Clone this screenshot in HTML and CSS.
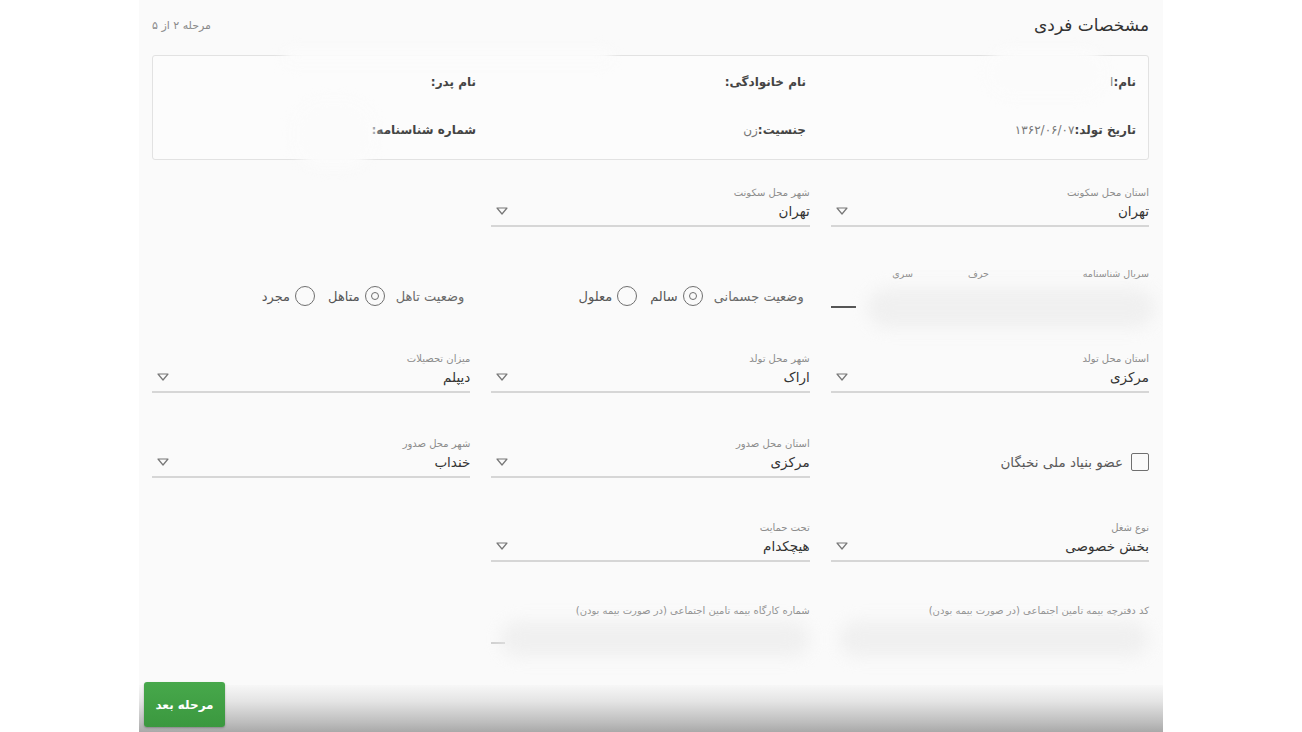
FILE: index.html
```html
<!DOCTYPE html>
<html lang="fa" dir="rtl">
<head>
<meta charset="utf-8">
<title>مشخصات فردی</title>
<link rel="stylesheet" href="styles.css">
</head>
<body>
<div class="page">
  <main class="content">
    <header class="head">
      <h1 class="title">مشخصات فردی</h1>
      <span class="step">مرحله ۲ از ۵</span>
    </header>

    <section class="info">
      <div class="info-item"><b>نام:</b><span>ا</span></div>
      <div class="info-item"><b>نام خانوادگی:</b></div>
      <div class="info-item"><b>نام پدر:</b></div>
      <div class="info-item"><b>تاریخ تولد:</b><span>۱۳۶۲/۰۶/۰۷</span></div>
      <div class="info-item"><b>جنسیت:</b><span>زن</span></div>
      <div class="info-item"><b>شماره شناسنامه:</b></div>
      <i class="redact rd-a"></i>
      <i class="redact rd-b"></i>
      <i class="redact rd-c"></i>
    </section>

    <div class="row r1">
      <div class="select">
        <label class="lbl">استان محل سکونت</label>
        <div class="val"><span>تهران</span><svg class="arrow" viewBox="0 0 12 8"><path d="M1 1H11L6 7Z"/></svg></div>
      </div>
      <div class="select">
        <label class="lbl">شهر محل سکونت</label>
        <div class="val"><span>تهران</span><svg class="arrow" viewBox="0 0 12 8"><path d="M1 1H11L6 7Z"/></svg></div>
      </div>
      <div></div>
    </div>

    <div class="row r2">
      <div class="serial">
        <div class="serial-labels">
          <span class="s1">سریال شناسنامه</span>
          <span class="s2">حرف</span>
          <span class="s3">سری</span>
        </div>
        <div class="serial-line"><i class="dash"></i></div>
        <i class="fog fog-serial"></i>
      </div>
      <div class="radios">
        <span class="rlabel">وضعیت جسمانی</span>
        <span class="radio on"></span><span class="ropt">سالم</span>
        <span class="radio"></span><span class="ropt">معلول</span>
      </div>
      <div class="radios">
        <span class="rlabel">وضعیت تاهل</span>
        <span class="radio on"></span><span class="ropt">متاهل</span>
        <span class="radio"></span><span class="ropt">مجرد</span>
      </div>
    </div>

    <div class="row r3">
      <div class="select">
        <label class="lbl">استان محل تولد</label>
        <div class="val"><span>مرکزی</span><svg class="arrow" viewBox="0 0 12 8"><path d="M1 1H11L6 7Z"/></svg></div>
      </div>
      <div class="select">
        <label class="lbl">شهر محل تولد</label>
        <div class="val"><span>اراک</span><svg class="arrow" viewBox="0 0 12 8"><path d="M1 1H11L6 7Z"/></svg></div>
      </div>
      <div class="select">
        <label class="lbl">میزان تحصیلات</label>
        <div class="val"><span>دیپلم</span><svg class="arrow" viewBox="0 0 12 8"><path d="M1 1H11L6 7Z"/></svg></div>
      </div>
    </div>

    <div class="row r4">
      <div class="check">
        <span class="box"></span><span class="ctext">عضو بنیاد ملی نخبگان</span>
      </div>
      <div class="select">
        <label class="lbl">استان محل صدور</label>
        <div class="val"><span>مرکزی</span><svg class="arrow" viewBox="0 0 12 8"><path d="M1 1H11L6 7Z"/></svg></div>
      </div>
      <div class="select">
        <label class="lbl">شهر محل صدور</label>
        <div class="val"><span>خنداب</span><svg class="arrow" viewBox="0 0 12 8"><path d="M1 1H11L6 7Z"/></svg></div>
      </div>
    </div>

    <div class="row r5">
      <div class="select">
        <label class="lbl">نوع شغل</label>
        <div class="val"><span>بخش خصوصی</span><svg class="arrow" viewBox="0 0 12 8"><path d="M1 1H11L6 7Z"/></svg></div>
      </div>
      <div class="select">
        <label class="lbl">تحت حمایت</label>
        <div class="val"><span>هیچکدام</span><svg class="arrow" viewBox="0 0 12 8"><path d="M1 1H11L6 7Z"/></svg></div>
      </div>
      <div></div>
    </div>

    <div class="row r6">
      <div class="text-field">
        <label class="lbl">کد دفترچه بیمه تامین اجتماعی (در صورت بیمه بودن)</label>
        <i class="fog fog-wide"></i>
      </div>
      <div class="text-field">
        <label class="lbl">شماره کارگاه بیمه تامین اجتماعی (در صورت بیمه بودن)</label>
        <div class="tline"><i class="dash light"></i></div>
        <i class="fog fog-wide"></i>
      </div>
      <div></div>
    </div>
  </main>

  <footer class="bar">
    <button class="next" type="button">مرحله بعد</button>
  </footer>
</div>
</body>
</html>
```

FILE: styles.css
```css
* { box-sizing: border-box; }

html, body {
  margin: 0;
  padding: 0;
  background: #ffffff;
}

body {
  font-family: "DejaVu Sans", "Noto Sans", sans-serif;
  color: #333;
}

.page {
  width: 1024px;
  height: 732px;
  margin: 0 auto;
  background: #fafafa;
  display: flex;
  flex-direction: column;
  overflow: hidden;
}

.content {
  flex: 1;
  padding: 0 14px 0 13px;
}

/* header */
.head {
  height: 55px;
  display: flex;
  align-items: center;
  justify-content: space-between;
  padding-bottom: 5px;
}
.title {
  margin: 0;
  font-size: 17px;
  font-weight: normal;
  color: #333;
}
.step {
  font-size: 11px;
  color: #8a8a8a;
}

/* info box */
.info {
  position: relative;
  height: 105px;
  border: 1px solid #e2e2e2;
  border-radius: 3px;
  background: #fcfcfc;
  display: grid;
  grid-template-columns: 330px 330px 1fr;
  grid-template-rows: 24px 24px;
  row-gap: 24px;
  padding: 14px 12px 0 0;
  align-items: center;
}
.info-item {
  font-size: 12px;
  color: #444;
  white-space: nowrap;
}
.info-item b { font-weight: bold; color: #444; }
.info-item span { color: #777; }

.redact {
  position: absolute;
  background: #fbfbfb;
  filter: blur(6px);
  border-radius: 30px;
}
.rd-a { top: -8px; right: 42px; width: 120px; height: 50px; }
.rd-b { bottom: -10px; left: 140px; width: 82px; height: 70px; }
.rd-c { top: -8px; left: 130px; width: 330px; height: 18px; }

/* rows */
.row {
  display: grid;
  grid-template-columns: repeat(3, 1fr);
  column-gap: 21px;
}
.r1 { margin-top: 23px; }
.r2 { margin-top: 39px; height: 48px; }
.r3 { margin-top: 35px; }
.r4 { margin-top: 41px; height: 43px; }
.r5 { margin-top: 41px; }
.r6 { margin-top: 41px; height: 44px; }

/* select */
.select {
  padding-top: 2px;
  border-bottom: 2px solid #d6d6d6;
  height: 44px;
}
.lbl {
  display: block;
  font-size: 10px;
  line-height: 15px;
  color: #8c8c8c;
  white-space: nowrap;
}
.val {
  height: 22px;
  display: flex;
  align-items: center;
  justify-content: space-between;
  font-size: 13.5px;
  color: #333;
}
.arrow {
  width: 12px;
  height: 8px;
  margin-left: 5px;
  fill: none;
  stroke: #777;
  stroke-width: 1.2;
  stroke-linejoin: round;
}

/* serial */
.serial { position: relative; }
.serial-labels {
  display: flex;
  font-size: 9.5px;
  line-height: 16px;
  color: #8c8c8c;
}
.serial-labels .s1 { width: 160px; }
.serial-labels .s2 { width: 76px; }
.serial-labels .s3 { flex: 1; }
.serial-line {
  display: flex;
  justify-content: flex-end;
  margin-top: 24px;
}
.dash {
  display: block;
  width: 25px;
  height: 2px;
  background: #555;
}
.dash.light { width: 14px; background: #cfcfcf; }

.fog {
  position: absolute;
  background: #ececec;
  filter: blur(8px);
  opacity: .7;
  border-radius: 20px;
}
.fog-serial { top: 22px; right: -6px; width: 288px; height: 40px; }

/* radios */
.radios {
  display: flex;
  align-items: center;
  padding-top: 12px;
  padding-right: 6px;
  font-size: 13px;
  color: #555;
}
.rlabel { color: #6a6a6a; font-size: 13px; margin-left: 11px; }
.radio {
  width: 20px;
  height: 20px;
  border: 1.5px solid #6f6f6f;
  border-radius: 50%;
  margin-left: 5px;
  display: flex;
  align-items: center;
  justify-content: center;
}
.radio.on::after {
  content: "";
  width: 8px;
  height: 8px;
  border: 1.5px solid #6f6f6f;
  border-radius: 50%;
  box-sizing: border-box;
}
.ropt { margin-left: 13px; }

/* checkbox */
.check {
  display: flex;
  align-items: center;
  padding-top: 12px;
}
.box {
  width: 18px;
  height: 18px;
  border: 1.5px solid #6f6f6f;
  border-radius: 2px;
  margin-left: 8px;
}
.ctext { font-size: 13.5px; color: #5a5a5a; }

/* text fields */
.text-field { position: relative; padding-top: 1px; }
.text-field .lbl { line-height: 14px; }
.tline {
  display: flex;
  justify-content: flex-end;
  margin-top: 24px;
}
.fog-wide { top: 18px; right: 0; width: 310px; height: 36px; }

/* footer */
.bar {
  height: 47px;
  flex: none;
  background: linear-gradient(to bottom, #f7f7f7 0%, #e4e4e4 35%, #bdbdbd 80%, #a9a9a9 100%);
  display: flex;
  justify-content: flex-end;
  align-items: flex-start;
}
.next {
  margin: -3px 0 0 5px;
  width: 81px;
  height: 45px;
  border: none;
  border-radius: 3px;
  background: linear-gradient(#47a84b, #3b983f);
  color: #fff;
  font-family: "DejaVu Sans", sans-serif;
  font-size: 12px;
  font-weight: bold;
  box-shadow: 0 1px 2px rgba(0,0,0,.25);
}
```
